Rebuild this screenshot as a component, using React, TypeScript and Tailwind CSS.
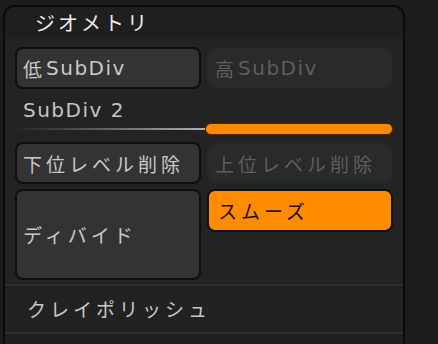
import React from 'react';

const jp = '[font-family:"Noto_Sans_CJK_JP","Noto_Sans",sans-serif]';
const lat = '[font-family:"DejaVu_Sans","Noto_Sans_CJK_JP",sans-serif]';

function J({ children }: { children: React.ReactNode }) {
  return <span className={`${jp} text-[19px] tracking-[4px]`}>{children}</span>;
}

function L({ children }: { children: React.ReactNode }) {
  return <span className={`${lat} text-[20px] tracking-[1.5px]`}>{children}</span>;
}

function Btn({
  children,
  kind = 'normal',
  className = '',
}: {
  children: React.ReactNode;
  kind?: 'normal' | 'disabled' | 'active';
  className?: string;
}) {
  const look =
    kind === 'active'
      ? 'bg-[#ff8c00] border-2 border-[#111] text-[#1a1208]'
      : kind === 'disabled'
      ? 'bg-[#2a2a2a] border-2 border-[#262626] text-[#5e5e5e]'
      : 'bg-[#333333] border-2 border-[#0f0f0f] text-[#c9c9c9]';
  return (
    <div
      className={`flex items-center rounded-[8px] pl-[6px] leading-none whitespace-nowrap ${look} ${className}`}
    >
      {children}
    </div>
  );
}

export default function App() {
  return (
    <div className="w-[438px] h-[344px] overflow-hidden bg-[#1c1c1c] pt-[5px] pl-[3px]">
      <div className="w-[402px] h-[400px] rounded-t-[12px] border-2 border-[#0a0a0a] bg-[#232323] overflow-hidden">
        {/* Header */}
        <div className={`h-[31px] bg-[#1f1f1f] flex items-center pl-[30px] text-[20px] tracking-[3px] text-[#ececec] ${jp}`}>
          ジオメトリ
        </div>

        {/* Body */}
        <div className="px-[10px] pt-[9px]">
          <div className="grid grid-cols-2 gap-[6px]">
            <Btn className="h-[42px]">
              <J>低</J>
              <L>SubDiv</L>
            </Btn>
            <Btn kind="disabled" className="h-[42px]">
              <J>高</J>
              <L>SubDiv</L>
            </Btn>
          </div>

          <div className="h-[33px] flex items-center pl-[8px] pt-[8px] text-[#c4c4c4]">
            <L>SubDiv 2</L>
          </div>

          <div className="flex items-center h-[14px]">
            <div className="ml-[4px] w-[186px] h-[2px] bg-gradient-to-r from-[#262626] to-[#b0b0b0]" />
            <div className="flex-1 h-[12px] rounded-full bg-[#ff8a00] border border-[#4a2800]" />
          </div>

          <div className="grid grid-cols-2 gap-[6px] mt-[6px]">
            <Btn className="h-[42px]">
              <J>下位レベル削除</J>
            </Btn>
            <Btn kind="disabled" className="h-[42px]">
              <J>上位レベル削除</J>
            </Btn>
          </div>

          <div className="grid grid-cols-2 gap-[6px] mt-[5px] items-start">
            <Btn className="h-[91px]">
              <J>ディバイド</J>
            </Btn>
            <Btn kind="active" className="h-[43px] pl-[9px]">
              <J>スムーズ</J>
            </Btn>
          </div>
        </div>

        <div className="mt-[4px] border-t-2 border-[#2d2d2d] h-[48px] bg-[#222222] flex items-center pl-[22px] text-[#c8c8c8]">
          <J>クレイポリッシュ</J>
        </div>
        <div className="border-t-2 border-[#2d2d2d] h-[20px] bg-[#202020]" />
      </div>
    </div>
  );
}
